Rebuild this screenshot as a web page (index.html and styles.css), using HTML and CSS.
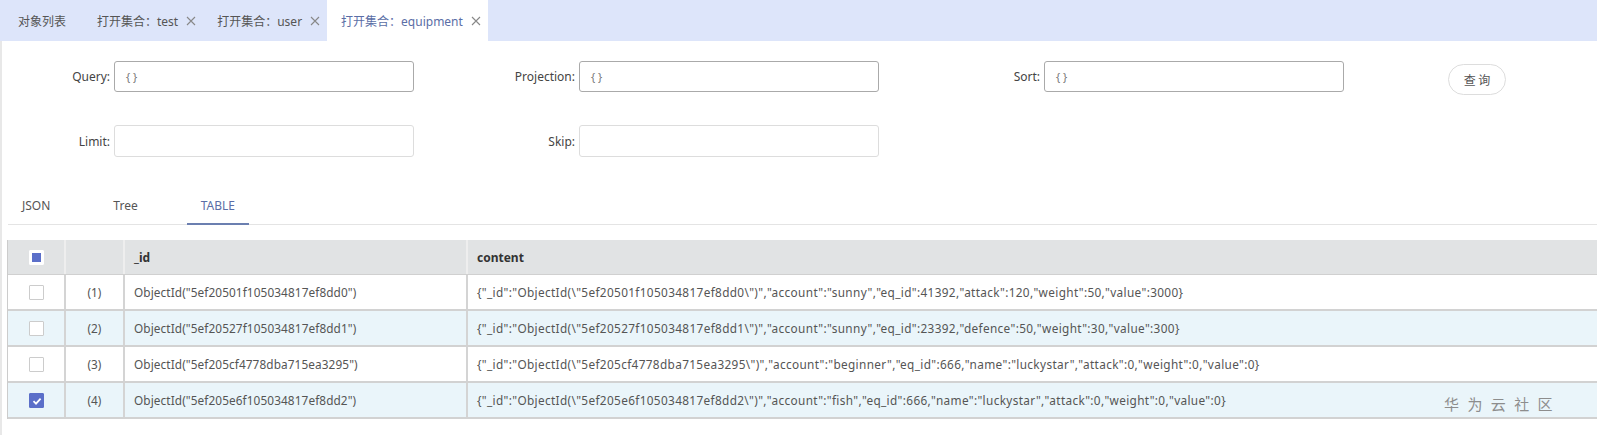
FILE: index.html
```html
<!DOCTYPE html>
<html lang="zh">
<head>
<meta charset="utf-8">
<title>equipment</title>
<link rel="stylesheet" href="styles.css">
</head>
<body>
<div class="tabbar">
  <div class="tab first">对象列表</div>
  <div class="tab">打开集合：test <svg class="close" viewBox="0 0 10 10" width="10" height="10"><path d="M1 1 L9 9 M9 1 L1 9" stroke="#888" stroke-width="1.1" fill="none"/></svg></div>
  <div class="tab">打开集合：user <svg class="close" viewBox="0 0 10 10" width="10" height="10"><path d="M1 1 L9 9 M9 1 L1 9" stroke="#888" stroke-width="1.1" fill="none"/></svg></div>
  <div class="tab active">打开集合：equipment <svg class="close" viewBox="0 0 10 10" width="10" height="10"><path d="M1 1 L9 9 M9 1 L1 9" stroke="#888" stroke-width="1.1" fill="none"/></svg></div>
</div>
<div class="page">
  <div class="form">
    <div class="form-row">
      <div class="item"><label class="lbl">Query:</label><div class="input filled">{ }</div></div>
      <div class="item"><label class="lbl">Projection:</label><div class="input filled">{ }</div></div>
      <div class="item"><label class="lbl">Sort:</label><div class="input filled">{ }</div></div>
      <button class="btn">查 询</button>
    </div>
    <div class="form-row">
      <div class="item"><label class="lbl">Limit:</label><div class="input"></div></div>
      <div class="item"><label class="lbl">Skip:</label><div class="input"></div></div>
    </div>
  </div>
  <div class="viewtabs">
    <div class="vtab">JSON</div>
    <div class="vtab">Tree</div>
    <div class="vtab on">TABLE</div>
  </div>
  <div class="table">
    <div class="tr head">
      <div class="td c1"><span class="cb ind"></span></div>
      <div class="td c2"></div>
      <div class="td c3">_id</div>
      <div class="td c4">content</div>
    </div>
    <div class="tr">
      <div class="td c1"><span class="cb"></span></div>
      <div class="td c2">(1)</div>
      <div class="td c3">ObjectId("5ef20501f105034817ef8dd0")</div>
      <div class="td c4">{"_id":"ObjectId(\"5ef20501f105034817ef8dd0\")","account":"sunny","eq_id":41392,"attack":120,"weight":50,"value":3000}</div>
    </div>
    <div class="tr alt">
      <div class="td c1"><span class="cb"></span></div>
      <div class="td c2">(2)</div>
      <div class="td c3">ObjectId("5ef20527f105034817ef8dd1")</div>
      <div class="td c4">{"_id":"ObjectId(\"5ef20527f105034817ef8dd1\")","account":"sunny","eq_id":23392,"defence":50,"weight":30,"value":300}</div>
    </div>
    <div class="tr">
      <div class="td c1"><span class="cb"></span></div>
      <div class="td c2">(3)</div>
      <div class="td c3">ObjectId("5ef205cf4778dba715ea3295")</div>
      <div class="td c4">{"_id":"ObjectId(\"5ef205cf4778dba715ea3295\")","account":"beginner","eq_id":666,"name":"luckystar","attack":0,"weight":0,"value":0}</div>
    </div>
    <div class="tr alt">
      <div class="td c1"><span class="cb checked"><svg viewBox="0 0 14 14" width="14" height="14"><path d="M3.5 7.2 L6 9.6 L10.6 4.6" fill="none" stroke="#fff" stroke-width="1.8"/></svg></span></div>
      <div class="td c2">(4)</div>
      <div class="td c3">ObjectId("5ef205e6f105034817ef8dd2")</div>
      <div class="td c4">{"_id":"ObjectId(\"5ef205e6f105034817ef8dd2\")","account":"fish","eq_id":666,"name":"luckystar","attack":0,"weight":0,"value":0}</div>
    </div>
    <div class="watermark">华 为 云 社 区</div>
  </div>
</div>
</body>
</html>
```
FILE: styles.css
```css
* { box-sizing: border-box; }
html, body { margin: 0; padding: 0; background: #fff; }
body {
  font-family: "Noto Sans", "Noto Sans CJK SC", sans-serif;
  font-size: 12px;
  color: #555;
  width: 1597px;
  height: 435px;
  overflow: hidden;
}
.tabbar {
  display: flex;
  height: 41px;
  background: #dde5fa;
  align-items: stretch;
}
.tab {
  display: flex;
  align-items: center;
  padding: 0 7px 0 14px;
  color: #555;
  font-size: 12px;
  white-space: nowrap;
}
.tab.first { margin-left: 4px; padding-right: 17px; }
.tab .close { margin-left: 8px; }
.tab.active { background: #fff; color: #5b6ea6; }
.page {
  border-left: 2px solid #e8e8e8;
  height: 394px;
  position: relative;
}
.form { padding-top: 20px; }
.form-row { display: flex; align-items: center; height: 31px; margin-bottom: 33px; }
.form-row + .form-row { height: 32px; }
.item { display: flex; align-items: center; width: 465px; }
.lbl {
  width: 112px;
  text-align: right;
  padding-right: 4px;
  color: #444;
  font-size: 12px;
}
.input {
  width: 300px;
  height: 31px;
  border: 1px solid #ddd;
  border-radius: 3px;
  padding: 0 11px;
  display: flex;
  align-items: center;
  color: #777;
  font-size: 11px;
}
.input.filled { border-color: #aaa; }
.form-row + .form-row .input { height: 32px; }
.btn {
  margin-left: 51px;
  margin-top: 6px;
  width: 58px;
  height: 31px;
  border: 1px solid #ddd;
  border-radius: 16px;
  background: #fff;
  font-family: "Noto Sans CJK SC", sans-serif;
  font-size: 12px;
  color: #555;
}
.viewtabs {
  display: flex;
  gap: 35px;
  margin-left: 6px;
  border-bottom: 1px solid #e4e4e4;
  height: 35px;
}
.vtab {
  padding: 0 14px;
  line-height: 31px;
  color: #555;
  font-size: 12px;
}
.vtab.on { color: #5b6ea6; border-bottom: 2px solid #6b7fb0; height: 35px; }
.table {
  margin: 15px 0 0 5px;
  border-left: 1px solid #ccc;
  position: relative;
}
.tr {
  display: flex;
  height: 36px;
  border-bottom: 2px solid #d2d2d2;
  background: #fff;
}
.tr.head { height: 35px; background: #e1e3e4; border-bottom: 1px solid #d0d0d0; }
.tr.alt { background: #eaf5fa; }
.td {
  display: flex;
  align-items: center;
  border-right: 2px solid #d4d4d4;
  padding: 0 9px;
  white-space: nowrap;
  font-size: 11.8px;
  color: #555;
}
.head .td { font-weight: bold; color: #333; font-size: 12px; border-right-color: #eee; }
.c1 { width: 58px; justify-content: center; }
.c2 { width: 59px; justify-content: center; }
.c3 { width: 343px; letter-spacing: 0.1px; }
.c4 { flex: 1; border-right: none; letter-spacing: 0.35px; }
.head .c3, .head .c4 { letter-spacing: 0; }
.cb {
  display: inline-block;
  width: 15px;
  height: 15px;
  border: 1px solid #ccc;
  background: #fff;
  border-radius: 1px;
  position: relative;
}
.cb.ind { border-color: #fff; }
.cb.ind::after {
  content: "";
  position: absolute;
  left: 2px; top: 2px;
  width: 9px; height: 9px;
  background: #5b6fc9;
}
.cb.checked { background: #5b6fc9; border-color: #5b6fc9; }
.cb.checked svg { position: absolute; left: 0; top: 0; }
.watermark {
  position: absolute;
  right: 42px;
  bottom: 5px;
  font-family: "Noto Sans CJK SC", sans-serif;
  font-size: 15px;
  color: #8d8d8d;
  letter-spacing: 2.5px;
}
```
